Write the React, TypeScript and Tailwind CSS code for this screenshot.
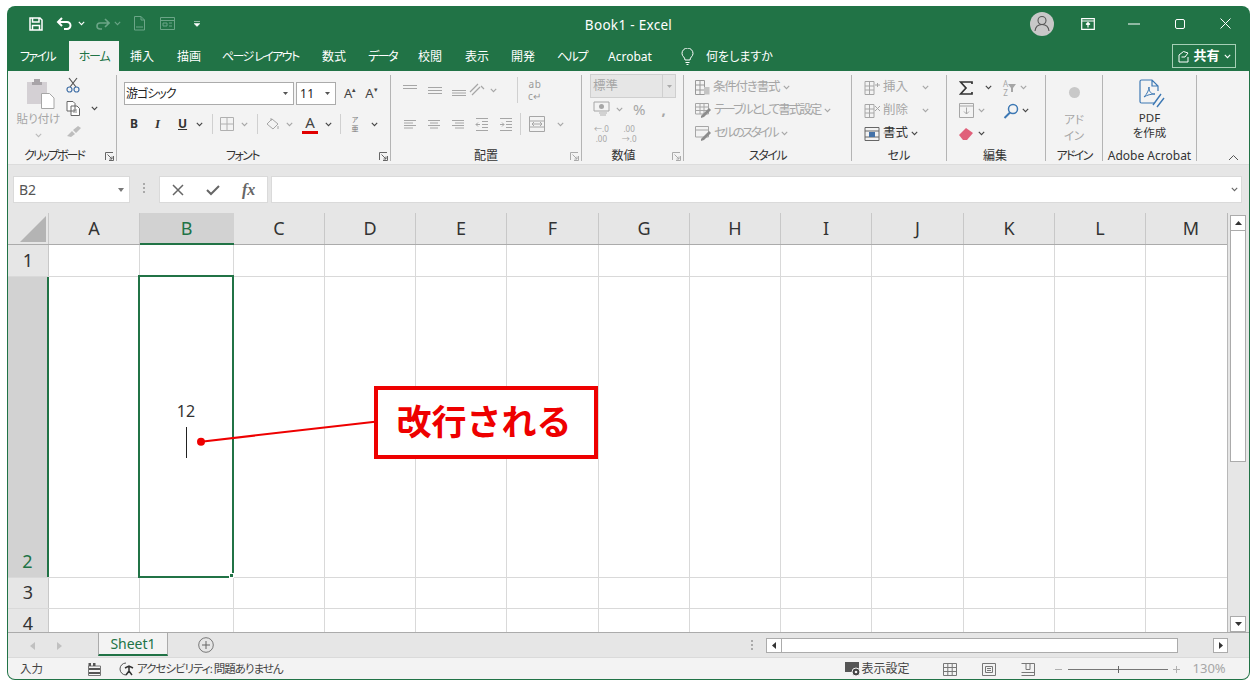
import type { ReactNode } from "react";

const colWidths = [
  ["A", 91], ["B", 94], ["C", 91], ["D", 91], ["E", 91], ["F", 92], ["G", 91],
  ["H", 91], ["I", 91], ["J", 92], ["K", 91], ["L", 91], ["M", 91],
] as const;

const rows = [
  { label: "1", h: "h-[32px]" },
  { label: "2", h: "h-[301px]" },
  { label: "3", h: "h-[31px]" },
  { label: "4", h: "h-[31px]" },
];

const tabs = [
  ["挿入", "ml-[11px] w-[24px]"],
  ["描画", "ml-[23px] w-[24px]"],
  ["ページ レイアウト", "ml-[21px] w-[78px] tracking-[-1.6px]"],
  ["数式", "ml-[22px] w-[24px]"],
  ["データ", "ml-[22px] w-[28px] tracking-[-1.5px]"],
  ["校閲", "ml-[22px] w-[24px]"],
  ["表示", "ml-[23px] w-[24px]"],
  ["開発", "ml-[22px] w-[24px]"],
  ["ヘルプ", "ml-[22px] w-[29px] tracking-[-1.5px]"],
  ["Acrobat", "ml-[22px] w-[45px]"],
];

function Chev({ color = "#444", className = "" }: { color?: string; className?: string }) {
  return (
    <svg width="7" height="5" viewBox="0 0 7 5" className={className}>
      <path d="M0.8 0.8 3.5 3.6 6.2 0.8" fill="none" stroke={color} strokeWidth="1.1" />
    </svg>
  );
}

function Launcher({ color = "#666" }: { color?: string }) {
  return (
    <svg width="9" height="9" viewBox="0 0 9 9">
      <path d="M0.5 8V0.5H8M8.5 4V8.5H4M2.5 2.5 7 7M7 4.5V7H4.5" fill="none" stroke={color} strokeWidth="1" />
    </svg>
  );
}

function Group({ w, label, launcher, launcherColor, children }: { w: string; label: ReactNode; launcher?: boolean; launcherColor?: string; children: ReactNode }) {
  return (
    <div className={`${w} h-[86px] shrink-0 flex flex-col border-r border-[#b4b4b4]`}>
      <div className="h-[73px] shrink-0">{children}</div>
      <div className="relative h-[16px] shrink-0 flex items-center justify-center text-[12px] text-[#333] whitespace-nowrap">
        {label}
        {launcher && (
          <span className="absolute right-[2px] top-[4px] flex">
            <Launcher color={launcherColor} />
          </span>
        )}
      </div>
    </div>
  );
}

function AlignIcon({ lines, color = "#a6a6a6" }: { lines: string; color?: string }) {
  return (
    <svg width="14" height="14" viewBox="0 0 14 14">
      <path d={lines} fill="none" stroke={color} strokeWidth="1" />
    </svg>
  );
}

function StyleRow({ icon, text, track }: { icon: ReactNode; text: string; track: string }) {
  return (
    <div className="h-[23px] flex items-center pl-[11px] text-[12.5px] text-[#a6a6a6] whitespace-nowrap">
      {icon}
      <span className={`ml-[3px] ${track}`}>{text}</span>
      <Chev color="#a6a6a6" className="ml-[4px]" />
    </div>
  );
}

function CellIcon({ mark }: { mark: ReactNode }) {
  return (
    <svg width="16" height="16" viewBox="0 0 16 16">
      <path d="M1 1.5H10V14.5H1ZM1 6H10M1 10H10M5.5 1.5V14.5" fill="none" stroke="#a6a6a6" strokeWidth="1" />
      {mark}
    </svg>
  );
}

function Dots() {
  return (
    <>
      <span className="w-[2px] h-[2px] bg-[#aaa]" />
      <span className="w-[2px] h-[2px] bg-[#aaa]" />
      <span className="w-[2px] h-[2px] bg-[#aaa]" />
    </>
  );
}

export default function App() {
  return (
    <div className="w-[1257px] h-[687px] bg-white pl-[7px] pt-[6px] overflow-hidden [font-family:'Noto_Sans','Noto_Sans_CJK_JP',sans-serif] [font-feature-settings:'palt']">
      <div className="relative w-[1243px] h-[674px] flex flex-col overflow-hidden rounded-[8px] bg-[#217346] pb-[1px]">
        {/* title bar */}
        <div className="h-[35px] shrink-0 grid grid-cols-[1fr_auto_1fr] items-center text-white">
          <div className="flex items-center pl-[22px]">
            <svg width="14" height="14" viewBox="0 0 14 14">
              <path d="M1 1H11L13 3V13H1ZM3.5 1V5H10V1M3.5 13V8.5H10.5V13" fill="none" stroke="#fff" strokeWidth="1.5" />
            </svg>
            <svg width="17" height="13" viewBox="0 0 17 13" className="ml-[13px]">
              <path d="M6 1 2 5 6 9M2 5H11A3.5 3.5 0 0 1 11 12H8" fill="none" stroke="#fff" strokeWidth="2" />
            </svg>
            <Chev color="#fff" className="ml-[5px]" />
            <svg width="16" height="12" viewBox="0 0 16 12" className="ml-[9px]">
              <path d="M11 1 15 5 11 9M15 5H6A3 3 0 0 0 6 11H8" fill="none" stroke="#6ba587" strokeWidth="1.6" />
            </svg>
            <Chev color="#6ba587" className="ml-[4px]" />
            <svg width="13" height="15" viewBox="0 0 13 15" className="ml-[12px]">
              <path d="M1.5 14V.5H8L11.5 4V14ZM8 .5V4H11.5M3 11H10" fill="none" stroke="#6ba587" strokeWidth="1" />
            </svg>
            <svg width="15" height="13" viewBox="0 0 15 13" className="ml-[14px]">
              <path d="M.5.5H14.5V12.5H.5ZM.5 3.5H14.5M3 6H7V9H3ZM9 6H12M9 9H12" fill="none" stroke="#6ba587" strokeWidth="1" />
            </svg>
            <svg width="6" height="6" viewBox="0 0 6 6" className="ml-[19px]">
              <path d="M0 0.5H6M0 2.5H6L3 5.5Z" fill="#fff" stroke="#fff" strokeWidth=".5" />
            </svg>
          </div>
          <div className="text-[13.5px] tracking-[.3px] pt-[3px]">Book1 - Excel</div>
          <div className="flex items-center justify-end pr-[19px]">
            <div className="w-[24px] h-[24px] rounded-full bg-[#c8c8c8] flex items-center justify-center">
              <svg width="16" height="17" viewBox="0 0 16 17">
                <circle cx="8" cy="5.5" r="4" fill="none" stroke="#555" strokeWidth="1.1" />
                <path d="M1 16C1.5 11.5 4.5 9.5 8 9.5S14.5 11.5 15 16" fill="none" stroke="#555" strokeWidth="1.1" />
              </svg>
            </div>
            <svg width="14" height="12" viewBox="0 0 14 12" className="ml-[27px]">
              <path d="M.7.7H13.3V11.3H.7ZM.7 3H13.3M7 9.5V5M5 6.5 7 4.5 9 6.5" fill="none" stroke="#fff" strokeWidth="1.2" />
            </svg>
            <svg width="12" height="2" viewBox="0 0 12 2" className="ml-[33px]">
              <path d="M0 1H12" stroke="#fff" strokeWidth="1" />
            </svg>
            <svg width="10" height="10" viewBox="0 0 10 10" className="ml-[35px]">
              <rect x=".5" y=".5" width="9" height="9" rx="1.5" fill="none" stroke="#fff" />
            </svg>
            <svg width="11" height="11" viewBox="0 0 11 11" className="ml-[35px]">
              <path d="M.5.5 10.5 10.5M10.5.5.5 10.5" stroke="#fff" strokeWidth="1" />
            </svg>
          </div>
        </div>

        {/* tab row */}
        <div className="h-[30px] shrink-0 flex items-end text-[12px] text-white whitespace-nowrap">
          <div className="ml-[13px] w-[34px] pb-[5px] tracking-[-1.7px]">ファイル</div>
          <div className="ml-[15px] w-[50px] h-[30px] bg-[#f3f3f3] text-[#217346] flex items-center justify-center tracking-[-1.2px] pt-[1px]">ホーム</div>
          {tabs.map(([t, c]) => (
            <div key={t} className={`${c} pb-[5px]`}>{t}</div>
          ))}
          <svg width="13" height="17" viewBox="0 0 13 17" className="ml-[28px] mb-[6px]">
            <path d="M4 12C4 9 1 8.5 1 5.5A5.5 5.5 0 0 1 12 5.5C12 8.5 9 9 9 12ZM4.5 14.5H8.5M5.5 16.5H7.5" fill="none" stroke="#fff" strokeWidth="1" />
          </svg>
          <div className="ml-[12px] pb-[5px]">何をしますか</div>
          <div className="ml-auto mr-[14px] mb-[3px] w-[64px] h-[24px] border border-[#a6cfb6] flex items-center justify-center font-bold text-[13px]">
            <svg width="13" height="13" viewBox="0 0 13 13" className="mr-[3px]">
              <path d="M2 5V12H11V7M2 5 6.5 1.5 11 3 8 7H4.5" fill="none" stroke="#fff" strokeWidth="1" />
            </svg>
            共有
            <Chev color="#fff" className="ml-[4px]" />
          </div>
        </div>

        {/* ribbon */}
        <div className="relative mx-[1px] h-[94px] shrink-0 bg-[#f3f3f3] border-b border-[#dcdcdc] pt-[4px] flex">
          <Group w="w-[109px]" label={<span className="mr-[16px] tracking-[-2px]">クリップボード</span>} launcher>
            <div className="flex">
              <div className="w-[58px] pt-[4px] flex flex-col items-center pl-[7px] text-[11.5px] text-[#a6a6a6] whitespace-nowrap">
                <svg width="29" height="30" viewBox="0 0 29 30">
                  <path d="M1 3H21V25H1Z" fill="#d4d0d4" />
                  <path d="M6 3H16V6H6ZM8 0H14V3H8Z" fill="#a8a4a8" />
                  <path d="M15.5 14.5H23.5L28 19V29.5H15.5Z" fill="#fff" stroke="#a6a6a6" />
                </svg>
                <span className="mt-[1px] -ml-[4px]">貼り付け</span>
                <Chev color="#bbb" className="mt-[6px] -ml-[4px]" />
              </div>
              <div className="pt-[2px] flex flex-col">
                <svg width="14" height="16" viewBox="0 0 14 16">
                  <path d="M3 1 10 10M11 1 4 10" fill="none" stroke="#555" strokeWidth="1.2" />
                  <circle cx="3.5" cy="12.5" r="2.5" fill="none" stroke="#4472a8" strokeWidth="1.2" />
                  <circle cx="10.5" cy="12.5" r="2.5" fill="none" stroke="#4472a8" strokeWidth="1.2" />
                </svg>
                <div className="mt-[8px] flex items-center">
                  <svg width="15" height="15" viewBox="0 0 15 15">
                    <path d="M1 .5H7L9 2.5V10H1ZM5 5H11L13.5 7.5V14.5H5Z" fill="#fff" stroke="#666" />
                    <path d="M7 9H11M7 11H11" stroke="#888" />
                  </svg>
                  <Chev className="ml-[10px]" />
                </div>
                <svg width="16" height="12" viewBox="0 0 16 12" className="mt-[9px]">
                  <path d="M1 11 6 6 9 9 5 12ZM7 5 12 1 15 3 10 8Z" fill="#bdbdbd" />
                </svg>
              </div>
            </div>
          </Group>

          <Group w="w-[274px]" label={<span className="-ml-[22px] tracking-[-1.5px]">フォント</span>} launcher>
            <div className="pl-[7px] pt-[7px]">
              <div className="flex items-center">
                <div className="w-[170px] h-[23px] bg-white border border-[#ababab] flex items-center pl-[1px] pr-[5px] text-[12px] text-[#222]">
                  <span className="flex-1 tracking-[-1px]">游ゴシック</span>
                  <svg width="5" height="3" viewBox="0 0 5 3"><path d="M0 0H5L2.5 3Z" fill="#555" /></svg>
                </div>
                <div className="ml-[2px] w-[40px] h-[23px] bg-white border border-[#ababab] flex items-center pl-[3px] pr-[5px] text-[12px] text-[#222] tracking-[.5px]">
                  <span className="flex-1">11</span>
                  <svg width="5" height="3" viewBox="0 0 5 3"><path d="M0 0H5L2.5 3Z" fill="#555" /></svg>
                </div>
                <span className="ml-[8px] text-[13px] text-[#444] relative leading-none">A<span className="absolute -right-[4px] -top-[1px] text-[7px]">▴</span></span>
                <span className="ml-[13px] text-[13px] text-[#444] relative leading-none">A<span className="absolute -right-[4px] -top-[1px] text-[7px]">▾</span></span>
              </div>
              <div className="mt-[7px] h-[24px] flex items-center text-[12px] text-[#333]">
                <span className="ml-[6px] w-[8px] font-bold">B</span>
                <span className="ml-[17px] w-[8px] font-bold italic [font-family:'Liberation_Serif',serif] text-[13px]">I</span>
                <span className="ml-[15px] w-[10px] font-bold underline">U</span>
                <Chev className="ml-[8px]" />
                <span className="ml-[9px] w-px h-[20px] bg-[#d0d0d0]" />
                <svg width="14" height="14" viewBox="0 0 14 14" className="ml-[7px]">
                  <path d="M.5.5H13.5V13.5H.5ZM.5 7H13.5M7 .5V13.5" fill="none" stroke="#b0b0b0" />
                </svg>
                <Chev color="#a6a6a6" className="ml-[7px]" />
                <span className="ml-[9px] w-px h-[20px] bg-[#d0d0d0]" />
                <svg width="14" height="14" viewBox="0 0 14 14" className="ml-[8px]">
                  <path d="M1 7 6 2 12 7 7 12ZM5 1V4M12 9V12" fill="none" stroke="#a6a6a6" />
                </svg>
                <Chev color="#a6a6a6" className="ml-[6px]" />
                <span className="ml-[9px] flex flex-col items-center w-[16px] leading-none text-[15px] text-[#444]">
                  A
                  <span className="mt-[1px] w-[16px] h-[3px] bg-[#e00000]" />
                </span>
                <Chev className="ml-[7px]" />
                <span className="ml-[8px] w-px h-[20px] bg-[#d0d0d0]" />
                <span className="ml-[8px] w-[12px] flex flex-col items-center text-[7px] leading-[9px] text-[#777]">
                  <span>ア</span>
                  <span>亜</span>
                </span>
                <Chev className="ml-[10px]" />
              </div>
            </div>
          </Group>

          <Group w="w-[191px]" label="配置" launcher launcherColor="#aaa">
            <div className="pl-[12px] pt-[4px]">
              <div className="h-[22px] flex items-center">
                <AlignIcon lines="M0 2.5H14M0 5.5H14" />
                <span className="ml-[11px] flex"><AlignIcon lines="M0 4.5H14M0 7.5H14M0 10.5H14" /></span>
                <span className="ml-[10px] flex"><AlignIcon lines="M0 7.5H14M0 10H14M0 12.5H14" /></span>
                <svg width="16" height="14" viewBox="0 0 16 14" className="ml-[3px]">
                  <path d="M1 9 9 1M3 12 11 4M12 3 15 6" fill="none" stroke="#a6a6a6" strokeWidth="1.2" />
                </svg>
                <Chev color="#a6a6a6" className="ml-[5px]" />
                <span className="ml-[20px] w-px h-[26px] bg-[#d0d0d0]" />
                <span className="ml-[10px] flex flex-col items-center text-[10px] leading-[12px] text-[#999] tracking-[.5px]">
                  <span>ab</span>
                  <span>c↵</span>
                </span>
              </div>
              <div className="mt-[12px] h-[22px] flex items-center">
                <AlignIcon lines="M1 3.5H13M1 6H10M1 8.5H13M1 11H10" />
                <span className="ml-[10px] flex"><AlignIcon lines="M1 3.5H13M3 6H11M1 8.5H13M3 11H11" /></span>
                <span className="ml-[10px] flex"><AlignIcon lines="M1 3.5H13M4 6H13M1 8.5H13M4 11H13" /></span>
                <span className="ml-[10px] flex"><AlignIcon lines="M1 1.5H13M7 4.5H13M7 7.5H13M7 10.5H13M1 13.5H13M5 7.5H1M3 5.5 1 7.5 3 9.5" /></span>
                <span className="ml-[10px] flex"><AlignIcon lines="M1 1.5H13M7 4.5H13M7 7.5H13M7 10.5H13M1 13.5H13M1 7.5H5M3 5.5 5 7.5 3 9.5" /></span>
                <span className="ml-[7px] w-px h-[22px] bg-[#d0d0d0]" />
                <svg width="16" height="16" viewBox="0 0 16 16" className="ml-[8px]">
                  <path d="M.5.5H15.5V15.5H.5ZM.5 5H15.5M.5 11H15.5M3 8H13M5 6 3 8 5 10M11 6 13 8 11 10" fill="none" stroke="#a6a6a6" />
                </svg>
                <Chev color="#a6a6a6" className="ml-[12px]" />
              </div>
            </div>
          </Group>

          <Group w="w-[102px]" label={<span className="-ml-[18px]">数値</span>} launcher launcherColor="#aaa">
            <div className="pl-[8px]">
              <div className="-mt-[1px] w-[86px] h-[24px] bg-[#e6e6e6] border border-[#cfcfcf] flex items-center justify-between text-[12.5px] text-[#a6a6a6] pl-[2px]">
                <span>標準</span>
                <span className="w-[13px] h-full border-l border-[#cfcfcf] flex items-center justify-center">
                  <svg width="5" height="3" viewBox="0 0 5 3"><path d="M0 0H5L2.5 3Z" fill="#aaa" /></svg>
                </span>
              </div>
              <div className="h-[22px] flex items-center text-[#a6a6a6]">
                <svg width="17" height="16" viewBox="0 0 17 16" className="ml-[3px]">
                  <path d="M1 1H16V10H1Z" fill="none" stroke="#a6a6a6" />
                  <circle cx="8.5" cy="5.5" r="2.5" fill="#a6a6a6" />
                  <path d="M6 12H14M7 14H13" stroke="#c8c8c8" strokeWidth="1.5" />
                </svg>
                <Chev color="#a6a6a6" className="ml-[6px]" />
                <span className="ml-[10px] text-[15px] leading-none">%</span>
                <span className="ml-[16px] text-[15px] font-bold leading-none">,</span>
              </div>
              <div className="mt-[4px] flex text-[8px] leading-[10px] text-[#a6a6a6]">
                <span className="ml-[4px] flex flex-col items-center"><span>←.0</span><span>.00</span></span>
                <span className="ml-[13px] flex flex-col items-center"><span>.00</span><span>→.0</span></span>
              </div>
            </div>
          </Group>

          <Group w="w-[168px]" label={<span className="tracking-[-1.5px]">スタイル</span>}>
            <div className="pt-[1px]">
              <StyleRow text="条件付き書式" track="tracking-[-1.2px]" icon={
                <svg width="15" height="15" viewBox="0 0 15 15">
                  <path d="M.5.5H9.5V14.5H.5ZM.5 5H9.5M.5 10H9.5M5 .5V14.5" fill="none" stroke="#999" />
                  <path d="M9 7H14.5V14.5H9Z" fill="#c4c4c4" />
                </svg>} />
              <StyleRow text="テーブルとして書式設定" track="tracking-[-2px]" icon={
                <svg width="16" height="15" viewBox="0 0 16 15">
                  <path d="M.5.5H13.5V11H.5ZM.5 4H13.5M.5 7.5H13.5M5 .5V11M9 .5V11" fill="none" stroke="#a6a6a6" />
                  <path d="M6 13 14 5 16 7 9 14 6 15Z" fill="#8c8c8c" />
                </svg>} />
              <StyleRow text="セルのスタイル" track="tracking-[-2.5px]" icon={
                <svg width="16" height="15" viewBox="0 0 16 15">
                  <path d="M.5.5H13.5V11H.5ZM.5 4H13.5" fill="none" stroke="#a6a6a6" />
                  <path d="M6 13 14 5 16 7 9 14 6 15Z" fill="#8c8c8c" />
                </svg>} />
            </div>
          </Group>

          <Group w="w-[95px]" label="セル">
            <div className="pl-[12px] pt-[1px] text-[12.5px] text-[#a6a6a6]">
              <div className="h-[23px] flex items-center">
                <CellIcon mark={<path d="M11 5H16M13.5 3V7" stroke="#a6a6a6" />} />
                <span className="ml-[3px] w-[39px]">挿入</span>
                <Chev color="#a6a6a6" />
              </div>
              <div className="h-[23px] flex items-center">
                <CellIcon mark={<path d="M11 3 16 8M16 3 11 8" stroke="#a6a6a6" />} />
                <span className="ml-[3px] w-[39px]">削除</span>
                <Chev color="#a6a6a6" />
              </div>
              <div className="h-[23px] flex items-center text-[#333]">
                <svg width="16" height="16" viewBox="0 0 16 16">
                  <path d="M1 1.5H15V14.5H1ZM1 5H15M1 11H15" fill="none" stroke="#666" />
                  <rect x="5" y="6" width="6" height="5" fill="#4472a8" />
                </svg>
                <span className="ml-[3px]">書式</span>
                <Chev className="ml-[3px]" />
              </div>
            </div>
          </Group>

          <Group w="w-[99px]" label={<span className="-ml-[2px]">編集</span>}>
            <div className="pl-[12px] pt-[1px]">
              <div className="h-[23px] flex items-center">
                <svg width="14" height="14" viewBox="0 0 14 14">
                  <path d="M13 3V1H1.5L7 7 1.5 13H13V11" fill="none" stroke="#333" strokeWidth="1.7" />
                </svg>
                <Chev className="ml-[12px]" />
                <span className="ml-[11px] flex items-center text-[8px] text-[#a6a6a6] leading-[9px]">
                  <span className="flex flex-col items-center"><span>A</span><span>Z</span></span>
                  <svg width="8" height="8" viewBox="0 0 8 8"><path d="M0 0H8L5 4V8H3V4Z" fill="#a6a6a6" /></svg>
                </span>
                <Chev color="#a6a6a6" className="ml-[4px]" />
              </div>
              <div className="h-[23px] flex items-center">
                <svg width="15" height="15" viewBox="0 0 15 15">
                  <path d="M.5.5H14.5V14.5H.5ZM.5 3H14.5M7.5 4.5V11M5 8.5 7.5 11 10 8.5" fill="none" stroke="#a6a6a6" />
                </svg>
                <Chev color="#a6a6a6" className="ml-[4px]" />
                <svg width="16" height="16" viewBox="0 0 16 16" className="ml-[18px]">
                  <circle cx="10" cy="6" r="4.5" fill="none" stroke="#3c78b4" strokeWidth="1.5" />
                  <path d="M7 9.5 1.5 15" stroke="#3c78b4" strokeWidth="2" />
                </svg>
                <Chev className="ml-[3px]" />
              </div>
              <div className="h-[23px] flex items-center">
                <svg width="14" height="12" viewBox="0 0 14 12">
                  <path d="M0 7 7 0 14 5 8 12H4Z" fill="#e0607a" />
                </svg>
                <Chev className="ml-[5px]" />
              </div>
            </div>
          </Group>

          <Group w="w-[57px]" label={<span className="tracking-[-1.7px]">アドイン</span>}>
            <div className="flex flex-col items-center text-[11.5px] leading-[16px] text-[#a6a6a6]">
              <span className="mt-[12px] w-[11px] h-[11px] rounded-full bg-[#c8c8c8]" />
              <span className="mt-[14px]">アド</span>
              <span>イン</span>
            </div>
          </Group>

          <Group w="w-[94px]" label="Adobe Acrobat">
            <div className="flex flex-col items-center text-[11.5px] leading-[15px] text-[#333]">
              <svg width="26" height="30" viewBox="0 0 26 30" className="mt-[4px] ml-[4px]">
                <path d="M15 24H2.5A1.5 1.5 0 0 1 1 22.5V2.5A1.5 1.5 0 0 1 2.5 1H13L19 7V12M13 1V7H19" fill="none" stroke="#3c78b4" strokeWidth="1.2" />
                <path d="M5 18C8 15 10 11 10 8 10 13 12 15 16 15 12 15 8 16 5 18Z" fill="none" stroke="#3c78b4" />
                <path d="M14 26 22 15M18 28 25 19" fill="none" stroke="#3c78b4" strokeWidth="1.4" />
              </svg>
              <span className="mt-[1px]">PDF</span>
              <span>を作成</span>
            </div>
          </Group>

          <svg width="11" height="7" viewBox="0 0 11 7" className="absolute right-[10px] bottom-[3px]">
            <path d="M1 6 5.5 1.5 10 6" fill="none" stroke="#555" />
          </svg>
        </div>

        {/* formula bar */}
        <div className="mx-[1px] h-[48px] shrink-0 bg-[#e6e6e6] flex items-start pt-[11px] pl-[5px]">
          <div className="w-[117px] h-[27px] bg-white border border-[#dadada] flex items-center pl-[5px] pr-[5px] text-[14px] text-[#555]">
            <span className="flex-1">B2</span>
            <svg width="6" height="4" viewBox="0 0 6 4"><path d="M0 0H6L3 4Z" fill="#777" /></svg>
          </div>
          <div className="ml-[13px] mt-[7px] flex flex-col gap-[2px]">
            <Dots />
          </div>
          <div className="ml-[14px] w-[109px] h-[27px] bg-white border border-[#dadada] flex items-center">
            <svg width="12" height="12" viewBox="0 0 12 12" className="ml-[12px]">
              <path d="M1 1 11 11M11 1 1 11" stroke="#666" strokeWidth="1.5" />
            </svg>
            <svg width="14" height="12" viewBox="0 0 14 12" className="ml-[22px]">
              <path d="M1 6 5 10 13 2" fill="none" stroke="#666" strokeWidth="2" />
            </svg>
            <span className="ml-[22px] text-[16px] font-bold italic text-[#666] [font-family:'Liberation_Serif',serif]">fx</span>
          </div>
          <div className="ml-[3px] w-[971px] h-[27px] bg-white border border-[#dadada] flex items-center justify-end pr-[3px]">
            <Chev color="#666" />
          </div>
        </div>

        {/* sheet */}
        <div className="relative mx-[1px] h-[419px] shrink-0 flex bg-[#e6e6e6] overflow-hidden">
          <div className="w-[1220px] shrink-0 overflow-hidden border-r border-[#b8b8b8] bg-white">
            <div className="h-[32px] flex bg-[#e6e6e6] border-b border-[#ababab]">
              <div className="w-[41px] shrink-0 flex items-end justify-end pr-[2px] pb-[2px] border-r border-[#c8c8c8]">
                <svg width="26" height="26" viewBox="0 0 26 26"><path d="M26 0V26H0Z" fill="#b4b4b4" /></svg>
              </div>
              {colWidths.map(([c, w]) => (
                <div
                  key={c}
                  style={{ width: w }}
                  className={
                    c === "B"
                      ? "shrink-0 h-[32px] flex items-center justify-center text-[18px] bg-[#d2d2d2] text-[#217346] border-b-2 border-[#217346] pr-[1px]"
                      : "shrink-0 flex items-center justify-center text-[18px] text-[#333] border-r border-[#c8c8c8]"
                  }
                >
                  {c}
                </div>
              ))}
            </div>
            {rows.map((r) => (
              <div key={r.label} className={`${r.h} flex border-b border-[#d9d9d9]`}>
                <div
                  className={
                    r.label === "2"
                      ? "w-[41px] shrink-0 bg-[#d2d2d2] text-[#217346] text-[18px] leading-none flex items-end justify-center pb-[7px] border-r-2 border-[#217346]"
                      : "w-[41px] shrink-0 bg-[#e6e6e6] text-[#333] text-[18px] leading-none flex items-center justify-center pb-[2px] border-r border-[#c8c8c8]"
                  }
                >
                  {r.label}
                </div>
                {colWidths.map(([c, w]) => (
                  <div key={c} style={{ width: w }} className="relative shrink-0 border-r border-[#d9d9d9]">
                    {c === "B" && r.label === "2" && (
                      <div className="absolute -left-[2px] -top-[2px] w-[96px] h-[303px] border-2 border-[#217346] flex flex-col items-center justify-center">
                        <span className="h-[31px] flex items-center text-[16px] text-[#333]">12</span>
                        <span className="w-px h-[31px] bg-[#222]" />
                        <span className="absolute -right-[2px] -bottom-[2px] w-[5px] h-[5px] bg-[#217346] border border-white" />
                      </div>
                    )}
                  </div>
                ))}
              </div>
            ))}
          </div>

          {/* vertical scrollbar */}
          <div className="ml-[2px] mt-[2px] w-[16px] flex flex-col">
            <div className="h-[16px] bg-white border border-[#ababab] flex items-center justify-center">
              <svg width="7" height="4" viewBox="0 0 7 4"><path d="M0 4H7L3.5 0Z" fill="#333" /></svg>
            </div>
            <div className="h-[231px] bg-white border-x border-b border-[#ababab]" />
            <div className="flex-1" />
            <div className="h-[16px] bg-white border border-[#ababab] flex items-center justify-center">
              <svg width="7" height="4" viewBox="0 0 7 4"><path d="M0 0H7L3.5 4Z" fill="#333" /></svg>
            </div>
          </div>

          {/* callout */}
          <svg width="190" height="34" viewBox="0 0 190 34" className="absolute left-[186px] top-[205px]">
            <path d="M7 23.7 181 3.7" stroke="#ee0000" strokeWidth="2" />
            <circle cx="7" cy="23.7" r="4" fill="#ee0000" />
          </svg>
          <div className="absolute left-[366px] top-[173px] w-[224px] h-[73px] bg-white border-[4px] border-[#ee0000] flex items-center justify-center text-[35px] font-bold text-[#ee0000] [font-feature-settings:normal] leading-none pb-[3px] pr-[4px]">
            改行される
          </div>
        </div>

        {/* sheet tabs */}
        <div className="mx-[1px] h-[25px] shrink-0 bg-[#e6e6e6] border-t border-[#ababab] flex items-start">
          <svg width="6" height="8" viewBox="0 0 6 8" className="ml-[22px] mt-[9px]"><path d="M5 0V8L0 4Z" fill="#c0c0c0" /></svg>
          <svg width="6" height="8" viewBox="0 0 6 8" className="ml-[20px] mt-[9px]"><path d="M1 0V8L6 4Z" fill="#c0c0c0" /></svg>
          <div className="ml-[36px] w-[70px] h-[23px] bg-[#f3f3f3] border-x border-[#ababab] border-b-2 border-b-[#217346] flex items-center justify-center text-[14px] text-[#217346]">
            Sheet1
          </div>
          <svg width="16" height="16" viewBox="0 0 16 16" className="ml-[30px] mt-[4px]">
            <circle cx="8" cy="8" r="7.3" fill="none" stroke="#777" />
            <path d="M8 4V12M4 8H12" stroke="#666" />
          </svg>
          <div className="ml-[537px] mt-[7px] flex flex-col gap-[2px]">
            <Dots />
          </div>
          <div className="ml-[13px] mt-[5px] w-[462px] h-[15px] flex">
            <div className="w-[16px] bg-white border border-[#ababab] flex items-center justify-center">
              <svg width="4" height="7" viewBox="0 0 4 7"><path d="M4 0V7L0 3.5Z" fill="#333" /></svg>
            </div>
            <div className="w-[396px] bg-white border-y border-r border-[#ababab]" />
            <div className="flex-1" />
            <div className="w-[15px] bg-white border border-[#ababab] flex items-center justify-center">
              <svg width="4" height="7" viewBox="0 0 4 7"><path d="M0 0V7L4 3.5Z" fill="#333" /></svg>
            </div>
          </div>
        </div>

        {/* status bar */}
        <div className="mx-[1px] flex-1 bg-[#f3f3f3] border-t border-[#dadada] rounded-b-[7px] flex items-center pt-[1px] text-[11.5px] text-[#444] whitespace-nowrap">
          <span className="ml-[12px] w-[24px]">入力</span>
          <svg width="13" height="13" viewBox="0 0 13 13" className="ml-[44px]">
            <path d="M.5 3H12.5V12.5H.5Z" fill="none" stroke="#777" />
            <path d="M.5 0H3V3H.5ZM5 0H7.5V3H5ZM1 5H12V7H1ZM1 9H12V11H1Z" fill="#555" />
          </svg>
          <svg width="17" height="15" viewBox="0 0 17 15" className="ml-[18px]">
            <path d="M7 1A6 6 0 1 0 7 13" fill="none" stroke="#555" />
            <path d="M6 6 10 4 14 6M10 5V9M7 13 10 9 13 13" fill="none" stroke="#333" strokeWidth="1.5" />
          </svg>
          <span className="ml-[1px] tracking-[-1px]">アクセシビリティ: 問題ありません</span>
          <svg width="16" height="16" viewBox="0 0 16 16" className="ml-[562px]">
            <path d="M0 1H14V11H0Z" fill="#555" />
            <circle cx="11" cy="11" r="4" fill="#444" stroke="#f3f3f3" />
            <circle cx="11" cy="11" r="1.3" fill="#f3f3f3" />
          </svg>
          <span className="ml-[1px] text-[12px]">表示設定</span>
          <svg width="14" height="13" viewBox="0 0 14 13" className="ml-[33px]">
            <path d="M.5.5H13.5V12.5H.5ZM.5 4.5H13.5M.5 8.5H13.5M4.8.5V12.5M9.2.5V12.5" fill="none" stroke="#777" />
          </svg>
          <svg width="14" height="13" viewBox="0 0 14 13" className="ml-[25px]">
            <path d="M.5.5H13.5V12.5H.5ZM3.5 3.5H10.5V9.5H3.5ZM5 5.5H9M5 7.5H9" fill="none" stroke="#777" />
          </svg>
          <svg width="14" height="13" viewBox="0 0 14 13" className="ml-[25px]">
            <path d="M.5.5H13.5V12.5H.5M.5 9.5H13.5M5 .5V6.5H9V.5" fill="none" stroke="#777" />
          </svg>
          <span className="ml-[20px] w-[7px] h-px bg-[#b0b0b0]" />
          <div className="relative ml-[6px] w-[100px] h-px bg-[#777]">
            <span className="absolute left-[50px] -top-[3px] w-px h-[7px] bg-[#666]" />
          </div>
          <svg width="7" height="7" viewBox="0 0 7 7" className="ml-[5px]"><path d="M0 3.5H7M3.5 0V7" stroke="#b0b0b0" /></svg>
          <span className="ml-[13px] text-[13px] text-[#a6a6a6]">130%</span>
        </div>
      </div>
    </div>
  );
}
